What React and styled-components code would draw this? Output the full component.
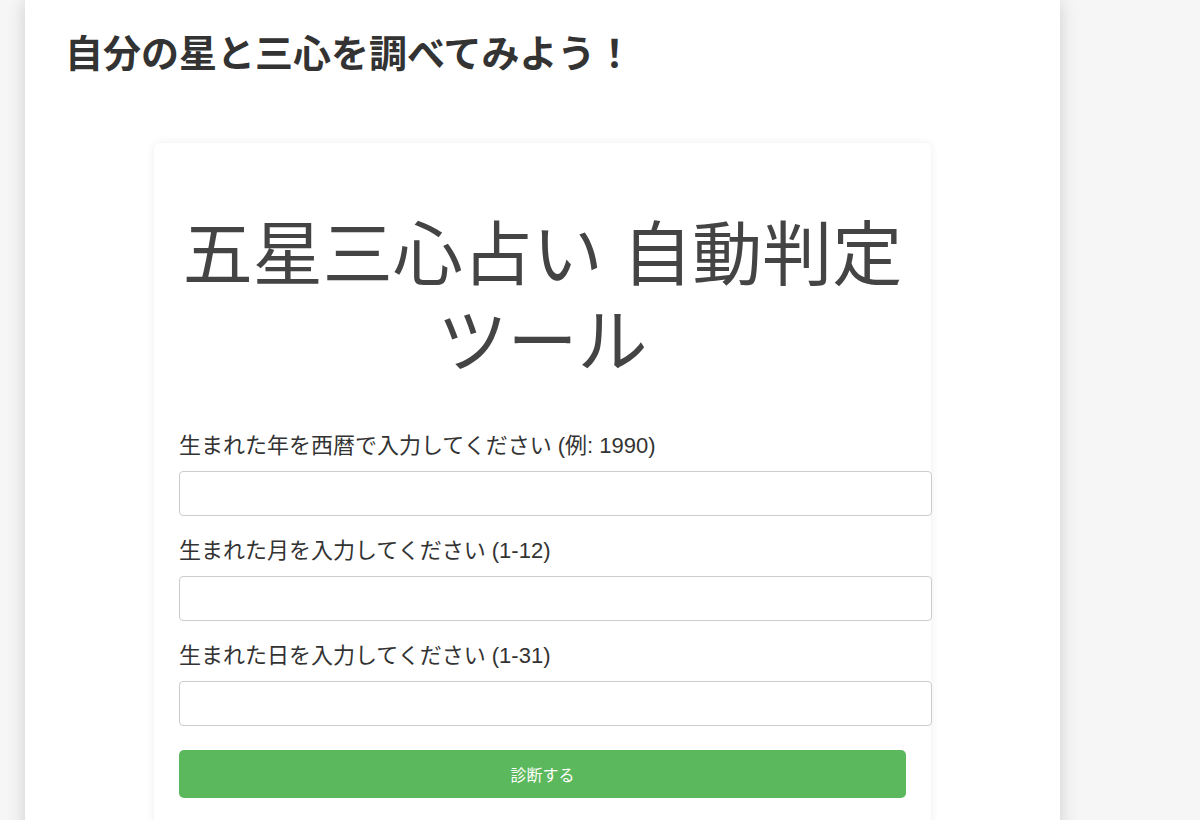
import React from 'react';
import styled, { createGlobalStyle } from 'styled-components';

const GlobalStyle = createGlobalStyle`
  html, body {
    margin: 0;
    padding: 0;
    background: #f6f6f6;
  }
  body {
    font-family: "Liberation Sans", "Noto Sans CJK JP", sans-serif;
    color: #333;
  }
`;

const Page = styled.div`
  width: 1035px;
  min-height: 900px;
  margin-left: 25px;
  padding: 26px 40px 0;
  box-sizing: border-box;
  background: #fff;
  box-shadow: 0 0 18px rgba(0, 0, 0, 0.16);
`;

const Heading = styled.h1`
  margin: 0 0 67px;
  font-family: "Noto Sans CJK JP", sans-serif;
  font-size: 38px;
  line-height: 50px;
  font-weight: 700;
  color: #333;
`;

const Card = styled.div`
  width: 777px;
  margin: 0 auto;
  padding: 20px 25px 40px;
  box-sizing: border-box;
  background: #fff;
  border-radius: 6px;
  box-shadow: 0 0 10px rgba(0, 0, 0, 0.07);
`;

const Title = styled.h2`
  margin: 50px 0 46px;
  font-size: 70px;
  line-height: 87px;
  font-weight: 400;
  text-align: center;
  color: #444;
`;

const Field = styled.div`
  display: flex;
  flex-direction: column;
  margin-bottom: 22px;
  &:last-of-type {
    margin-bottom: 24px;
  }
`;

const Label = styled.label`
  font-size: 22px;
  line-height: 26px;
  color: #333;
  margin-bottom: 12px;
`;

const Input = styled.input`
  width: 100%;
  height: 19px;
  padding: 12px;
  border: 1px solid #ccc;
  border-radius: 4px;
  font-size: 16px;
  background: #fff;
  outline: none;
`;

const Button = styled.button`
  display: block;
  width: 100%;
  height: 48px;
  border: none;
  border-radius: 5px;
  background: #5cb85c;
  color: #fff;
  font-family: "Liberation Sans", "Noto Sans CJK JP", sans-serif;
  font-size: 16px;
  cursor: pointer;
`;

const fields = [
  { id: 'year', label: '生まれた年を西暦で入力してください (例: 1990)' },
  { id: 'month', label: '生まれた月を入力してください (1-12)' },
  { id: 'day', label: '生まれた日を入力してください (1-31)' },
];

const App = () => {
  return (
    <>
      <GlobalStyle />
      <Page>
        <Heading>自分の星と三心を調べてみよう！</Heading>
        <Card>
          <Title>五星三心占い 自動判定ツール</Title>
          {fields.map((f) => (
            <Field key={f.id}>
              <Label htmlFor={f.id}>{f.label}</Label>
              <Input id={f.id} type="number" />
            </Field>
          ))}
          <Button>診断する</Button>
        </Card>
      </Page>
    </>
  );
};

export default App;
